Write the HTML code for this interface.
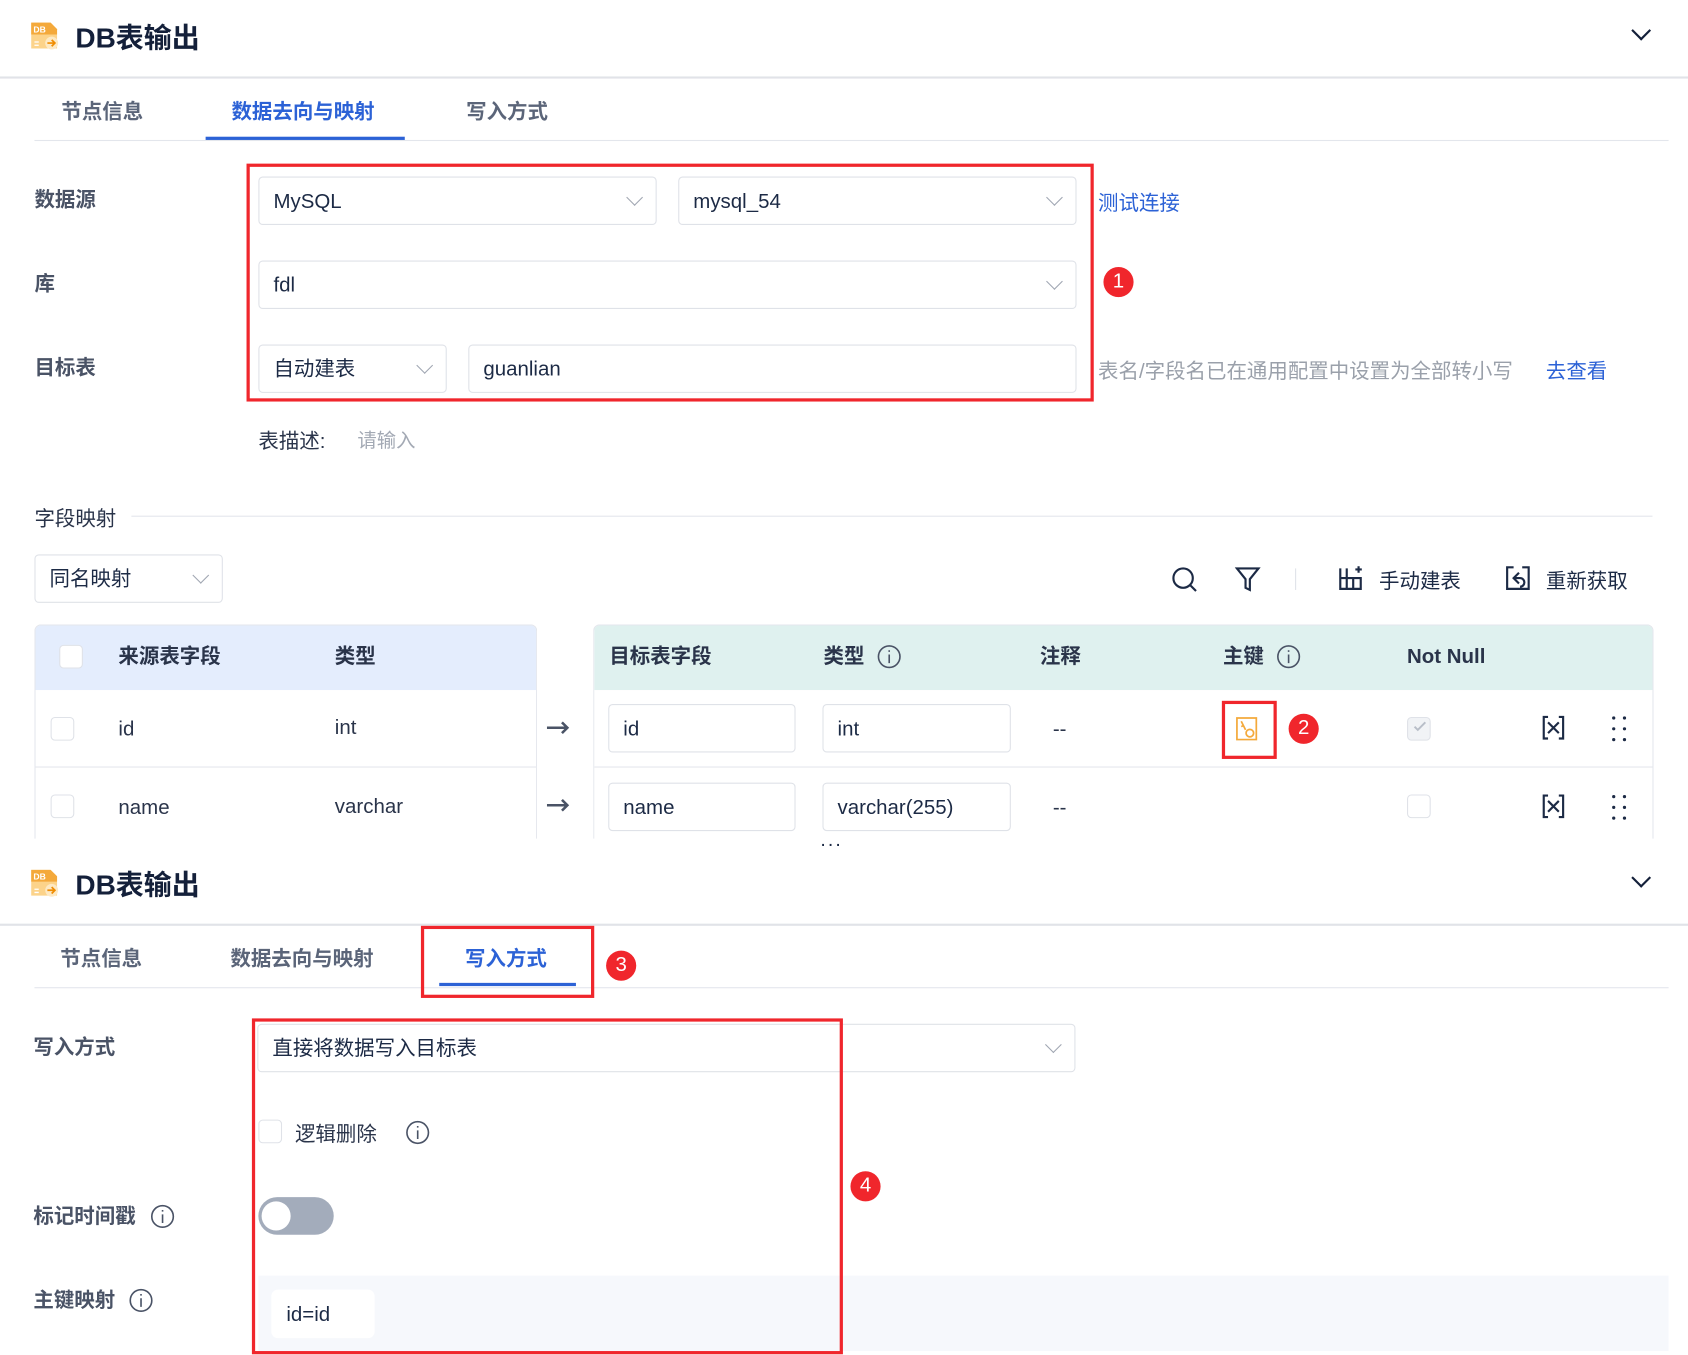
<!DOCTYPE html>
<html><head><meta charset="utf-8"><style>
*{margin:0;padding:0;box-sizing:border-box}
body{width:1688px;height:1355px;overflow:hidden;background:#fff;font-family:"Liberation Sans","Noto Sans CJK SC",sans-serif;color:#1c2a45}
#w{position:absolute;left:0;top:0;width:1568px;height:1259px;transform:scale(1.07653);transform-origin:0 0}
.a{position:absolute;white-space:nowrap}
.lbl{font-size:19px;font-weight:bold;color:#4a5366;line-height:24px}
.inp{position:absolute;border:1px solid #dfe2e8;border-radius:4px;background:#fff;font-size:19px;line-height:45px;padding-left:13px;color:#1c2a45}
.chev{position:absolute;right:14px;top:13px;width:11px;height:11px;border-right:1.5px solid #a0a6b2;border-bottom:1.5px solid #a0a6b2;transform:rotate(45deg)}
.red{position:absolute;border:3px solid #f0262c}
.badge{position:absolute;width:28px;height:28px;border-radius:50%;background:#f0262c;color:#fff;font-size:19px;text-align:center;line-height:28px}
.tab{font-size:19px;font-weight:bold;color:#5b6579}
.cb{position:absolute;width:22px;height:22px;border:1px solid #dfe2e8;border-radius:4px;background:#fff}
.th{font-size:19px;font-weight:bold;color:#2a344a;line-height:24px}
.td{font-size:19px;color:#2a344a;line-height:24px}
.hl{position:absolute;height:1px;background:#e3e6ec}
</style></head><body><div id="w">
<!-- section 1 -->
<svg class="a" style="left:27px;top:18px" width="30" height="30" viewBox="0 0 30 30"><path d="M2 3h18l6 6v18H2z" fill="#fcd38a"/><path d="M2 3h18l6 6v5H2z" fill="#f4a93b"/><text x="4" y="12" font-size="8" fill="#fff" font-family="Liberation Sans" font-weight="bold">DB</text><circle cx="21" cy="22" r="6" fill="#fde9c4"/><path d="M17 22h7M21 19l3 3-3 3" stroke="#f08c00" stroke-width="1.6" fill="none"/><path d="M5 21h4M5 24h4" stroke="#fff" stroke-width="1.2"/></svg>
<div class="a" style="left:70px;top:15px;font-size:26px;font-weight:bold;color:#14203a">DB表输出</div>
<div class="a" style="left:1518px;top:22px;width:13px;height:13px;border-right:2px solid #14203a;border-bottom:2px solid #14203a;transform:rotate(45deg)"></div>
<div class="hl" style="left:0;top:71px;width:1568px;height:2px;background:#e1e3e8"></div>
<div class="a tab" style="left:57px;top:89px">节点信息</div>
<div class="a tab" style="left:215px;top:89px;color:#2c62d6">数据去向与映射</div>
<div class="a tab" style="left:433px;top:89px">写入方式</div>
<div class="hl" style="left:32px;top:130px;width:1518px"></div>
<div class="a" style="left:191px;top:127px;width:185px;height:3px;background:#2c62d6"></div>

<div class="a lbl" style="left:32px;top:175px">数据源</div>
<div class="a lbl" style="left:32px;top:253px">库</div>
<div class="a lbl" style="left:32px;top:331px">目标表</div>
<div class="inp" style="left:240px;top:164px;width:370px;height:45px">MySQL<div class="chev"></div></div>
<div class="inp" style="left:630px;top:164px;width:370px;height:45px">mysql_54<div class="chev"></div></div>
<div class="inp" style="left:240px;top:242px;width:760px;height:45px">fdl<div class="chev"></div></div>
<div class="inp" style="left:240px;top:320px;width:175px;height:45px">自动建表<div class="chev"></div></div>
<div class="inp" style="left:435px;top:320px;width:565px;height:45px">guanlian</div>
<div class="red" style="left:229px;top:152px;width:787px;height:221px"></div>
<div class="a" style="left:1020px;top:174px;font-size:19px;color:#2c62d6">测试连接</div>
<div class="badge" style="left:1025px;top:248px">1</div>
<div class="a" style="left:1020px;top:330px;font-size:19px;color:#9aa0aa">表名/字段名已在通用配置中设置为全部转小写</div>
<div class="a" style="left:1436px;top:330px;font-size:19px;color:#2c62d6">去查看</div>
<div class="a" style="left:240px;top:395px;font-size:19px;color:#2a344a">表描述:</div>
<div class="a" style="left:332px;top:395px;font-size:18px;color:#a3a9b4">请输入</div>
<div class="a" style="left:32px;top:467px;font-size:19px;color:#2a344a">字段映射</div>
<div class="hl" style="left:122px;top:479px;width:1413px"></div>
<div class="inp" style="left:32px;top:515px;width:175px;height:45px">同名映射<div class="chev"></div></div>
<svg class="a" style="left:1087px;top:525px" width="28" height="28" viewBox="0 0 28 28" fill="none" stroke="#1c2a45" stroke-width="2"><circle cx="12" cy="12" r="9"/><path d="M19 19l5 5"/></svg>
<svg class="a" style="left:1147px;top:525px" width="24" height="26" viewBox="0 0 24 26" fill="none" stroke="#1c2a45" stroke-width="2"><path d="M2 3h20l-8 10v10l-4-2v-8z"/></svg>
<div class="a" style="left:1203px;top:528px;width:1px;height:20px;background:#dfe2e8"></div>
<svg class="a" style="left:1243px;top:525px" width="24" height="24" viewBox="0 0 24 24" fill="none" stroke="#1c2a45" stroke-width="2"><path d="M2 3v19h19V12H2M8 3v19M14 12v10M16 4h6M19 1v6"/></svg>
<div class="a" style="left:1281px;top:525px;font-size:19px;color:#1c2a45">手动建表</div>
<svg class="a" style="left:1398px;top:525px" width="24" height="24" viewBox="0 0 24 24" fill="none" stroke="#1c2a45" stroke-width="2"><path d="M8 2H2v20h20V2h-6M13 7l-5 5 5 5M8 12h6a4 4 0 010 8"/></svg>
<div class="a" style="left:1436px;top:525px;font-size:19px;color:#1c2a45">重新获取</div>

<!-- left table -->
<div class="a" style="left:32px;top:580px;width:467px;height:200px;border:1px solid #e3e6ec;border-bottom:none;border-radius:6px 6px 0 0;overflow:hidden">
 <div style="position:absolute;left:0;top:0;width:467px;height:60px;background:#e4edfd"></div>
 <div class="cb" style="left:22px;top:18px"></div>
 <div class="a th" style="left:77px;top:18px">来源表字段</div>
 <div class="a th" style="left:278px;top:18px">类型</div>
 <div class="hl" style="left:0;top:131px;width:467px"></div>
 <div class="cb" style="left:14px;top:85px"></div>
 <div class="a td" style="left:77px;top:85px">id</div>
 <div class="a td" style="left:278px;top:84px">int</div>
 <div class="cb" style="left:14px;top:157px"></div>
 <div class="a td" style="left:77px;top:158px">name</div>
 <div class="a td" style="left:278px;top:157px">varchar</div>
</div>
<svg class="a" style="left:508px;top:670px" width="22" height="12" viewBox="0 0 22 12" fill="none" stroke="#4a5366" stroke-width="2.4"><path d="M0 6h19M14 1l5 5-5 5"/></svg>
<svg class="a" style="left:508px;top:742px" width="22" height="12" viewBox="0 0 22 12" fill="none" stroke="#4a5366" stroke-width="2.4"><path d="M0 6h19M14 1l5 5-5 5"/></svg>
<!-- right table -->
<div class="a" style="left:551px;top:580px;width:985px;height:200px;border:1px solid #e3e6ec;border-bottom:none;border-radius:6px 6px 0 0;overflow:hidden">
 <div style="position:absolute;left:0;top:0;width:985px;height:60px;background:#dff1ef"></div>
 <div class="a th" style="left:14px;top:18px">目标表字段</div>
 <div class="a th" style="left:213px;top:18px">类型</div>
 <div class="a th" style="left:414px;top:18px">注释</div>
 <div class="a th" style="left:584px;top:18px">主键</div>
 <div class="a th" style="left:755px;top:18px">Not Null</div>
 <div class="hl" style="left:0;top:131px;width:985px"></div>
 <div class="inp" style="left:13px;top:73px;width:174px;height:45px">id</div>
 <div class="inp" style="left:212px;top:73px;width:175px;height:45px">int</div>
 <div class="inp" style="left:13px;top:146px;width:174px;height:45px">name</div>
 <div class="inp" style="left:212px;top:146px;width:175px;height:45px">varchar(255)</div>
 <div class="a td" style="left:426px;top:85px">--</div>
 <div class="a td" style="left:426px;top:158px">--</div>
 <div class="cb" style="left:755px;top:85px;background:#f1f3f6"></div>
 <div class="cb" style="left:755px;top:157px"></div>
</div>
<svg class="a" style="left:1313px;top:670px" width="12" height="10" viewBox="0 0 12 10" fill="none" stroke="#b8bec8" stroke-width="1.8"><path d="M1 5l3 3 7-7"/></svg>
<svg class="a" style="left:814px;top:598px" width="24" height="24" viewBox="0 0 24 24" fill="none" stroke="#4a5366" stroke-width="1.5"><circle cx="12" cy="12" r="10"/><path d="M12 10v8M12 6v1.5"/></svg>
<svg class="a" style="left:1185px;top:598px" width="24" height="24" viewBox="0 0 24 24" fill="none" stroke="#4a5366" stroke-width="1.5"><circle cx="12" cy="12" r="10"/><path d="M12 10v8M12 6v1.5"/></svg>
<svg class="a" style="left:1147px;top:665px" width="22" height="24" viewBox="0 0 22 24" fill="none" stroke="#f4a93b" stroke-width="1.6"><path d="M2 2h18v20H2zM6 5l4 8M8 9l-2 1"/><circle cx="14" cy="16" r="3.5"/></svg>
<div class="red" style="left:1135px;top:651px;width:51px;height:54px"></div>
<div class="badge" style="left:1197px;top:663px">2</div>
<svg class="a" style="left:1432px;top:664px" width="22" height="24" viewBox="0 0 22 24" fill="none" stroke="#1c2a45" stroke-width="2"><path d="M6 2H2v20h4M16 2h4v20h-4M6 7l10 10M16 7L6 17"/></svg>
<svg class="a" style="left:1432px;top:737px" width="22" height="24" viewBox="0 0 22 24" fill="none" stroke="#1c2a45" stroke-width="2"><path d="M6 2H2v20h4M16 2h4v20h-4M6 7l10 10M16 7L6 17"/></svg>
<svg class="a" style="left:1496px;top:664px" width="16" height="26" viewBox="0 0 16 26" fill="#1c2a45"><circle cx="3" cy="3" r="1.5"/><circle cx="13" cy="3" r="1.5"/><circle cx="3" cy="13" r="1.5"/><circle cx="13" cy="13" r="1.5"/><circle cx="3" cy="23" r="1.5"/><circle cx="13" cy="23" r="1.5"/></svg>
<svg class="a" style="left:1496px;top:737px" width="16" height="26" viewBox="0 0 16 26" fill="#1c2a45"><circle cx="3" cy="3" r="1.5"/><circle cx="13" cy="3" r="1.5"/><circle cx="3" cy="13" r="1.5"/><circle cx="13" cy="13" r="1.5"/><circle cx="3" cy="23" r="1.5"/><circle cx="13" cy="23" r="1.5"/></svg>
<div class="a" style="left:0;top:779px;width:1568px;height:480px;background:#fff"></div>
<div class="a" style="left:762px;top:770px;font-size:18px;color:#1c2a45;letter-spacing:2px">...</div>

<!-- section 2 -->
<svg class="a" style="left:27px;top:805px" width="30" height="30" viewBox="0 0 30 30"><path d="M2 3h18l6 6v18H2z" fill="#fcd38a"/><path d="M2 3h18l6 6v5H2z" fill="#f4a93b"/><text x="4" y="12" font-size="8" fill="#fff" font-family="Liberation Sans" font-weight="bold">DB</text><circle cx="21" cy="22" r="6" fill="#fde9c4"/><path d="M17 22h7M21 19l3 3-3 3" stroke="#f08c00" stroke-width="1.6" fill="none"/><path d="M5 21h4M5 24h4" stroke="#fff" stroke-width="1.2"/></svg>
<div class="a" style="left:70px;top:802px;font-size:26px;font-weight:bold;color:#14203a">DB表输出</div>
<div class="a" style="left:1518px;top:809px;width:13px;height:13px;border-right:2px solid #14203a;border-bottom:2px solid #14203a;transform:rotate(45deg)"></div>
<div class="hl" style="left:0;top:858px;width:1568px;height:2px;background:#e1e3e8"></div>
<div class="a tab" style="left:56px;top:876px">节点信息</div>
<div class="a tab" style="left:214px;top:876px">数据去向与映射</div>
<div class="a tab" style="left:432px;top:876px;color:#2c62d6">写入方式</div>
<div class="hl" style="left:32px;top:917px;width:1518px"></div>
<div class="a" style="left:408px;top:913px;width:127px;height:3px;background:#2c62d6"></div>
<div class="red" style="left:391px;top:860px;width:161px;height:67px"></div>
<div class="badge" style="left:563px;top:883px">3</div>

<div class="a lbl" style="left:31px;top:962px">写入方式</div>
<div class="inp" style="left:239px;top:951px;width:760px;height:45px">直接将数据写入目标表<div class="chev"></div></div>
<div class="cb" style="left:240px;top:1040px"></div>
<div class="a" style="left:274px;top:1039px;font-size:19px;color:#2a344a">逻辑删除</div>
<svg class="a" style="left:376px;top:1040px" width="24" height="24" viewBox="0 0 24 24" fill="none" stroke="#4a5366" stroke-width="1.5"><circle cx="12" cy="12" r="10"/><path d="M12 10v8M12 6v1.5"/></svg>
<div class="a lbl" style="left:31px;top:1119px">标记时间戳</div>
<svg class="a" style="left:139px;top:1118px" width="24" height="24" viewBox="0 0 24 24" fill="none" stroke="#4a5366" stroke-width="1.5"><circle cx="12" cy="12" r="10"/><path d="M12 10v8M12 6v1.5"/></svg>
<div class="a" style="left:240px;top:1112px;width:70px;height:35px;border-radius:18px;background:#a3acbb"><div style="position:absolute;left:3px;top:4px;width:27px;height:27px;border-radius:50%;background:#fff"></div></div>
<div class="a lbl" style="left:31px;top:1197px">主键映射</div>
<svg class="a" style="left:119px;top:1196px" width="24" height="24" viewBox="0 0 24 24" fill="none" stroke="#4a5366" stroke-width="1.5"><circle cx="12" cy="12" r="10"/><path d="M12 10v8M12 6v1.5"/></svg>
<div class="a" style="left:240px;top:1185px;width:1310px;height:70px;background:#f6f8fc"></div>
<div class="a" style="left:252px;top:1198px;width:96px;height:45px;background:#fff;border-radius:6px;font-size:19px;line-height:47px;padding-left:14px;color:#1c2a45">id=id</div>
<div class="red" style="left:234px;top:946px;width:549px;height:312px"></div>
<div class="badge" style="left:790px;top:1088px">4</div>
</div></body></html>
